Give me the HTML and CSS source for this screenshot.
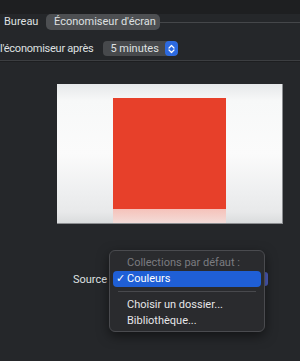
FILE: index.html
```html
<!DOCTYPE html>
<html lang="fr">
<head>
  <meta charset="UTF-8" />
  <title>Économiseur d'écran</title>
  <link rel="stylesheet" href="styles.css">
</head>
<body>

<!-- Barre du haut -->
<div class="topStrip"></div>

<!-- Onglets -->
<div class="tabs">
  <span class="tab">Bureau</span>
  <span class="tab active">Économiseur d'écran</span>
  <span class="tabLine"></span>
</div>

<!-- Délai -->
<div class="delayRow">
  <span class="label tight">l'économiseur après</span>
  <div class="popup">
    <span>5 minutes</span>
    <span class="stepper">
      <svg width="7" height="10" viewBox="0 0 7 10">
        <path d="M1 4 L3.5 1.5 L6 4 M1 6 L3.5 8.5 L6 6" fill="none" stroke="#fff" stroke-width="1.2" stroke-linecap="round" stroke-linejoin="round"/>
      </svg>
    </span>
  </div>
</div>
<div class="sep"></div>

<!-- Aperçu -->
<div class="previewWrap">
  <div class="preview">
    <div class="square">
      <div class="reflection"></div>
    </div>
  </div>
</div>

<!-- Source -->
<div class="sourceRow">
  <span class="label">Source</span>
  <div class="sourceBtn"></div>

  <div class="menu">
    <div class="menuHead">Collections par défaut :</div>
    <div class="menuItem selected"><span class="check">✓</span>Couleurs</div>
    <div class="menuSep"></div>
    <div class="menuItem">Choisir un dossier...</div>
    <div class="menuItem">Bibliothèque...</div>
  </div>
</div>

</body>
</html>
```

FILE: styles.css
```css
* { margin: 0; padding: 0; box-sizing: border-box; }
body {
  font-family: Roboto, "Liberation Sans", sans-serif;
  font-size: 11px;
  color: #dfe0e1;
  background: #25272a;
  width: 300px;
  height: 361px;
  overflow: hidden;
}

.topStrip {
  height: 14px;
  background: #1e1f21;
}

/* Onglets */
.tabs {
  display: flex;
  align-items: center;
  height: 16px;
}

.tab {
  padding: 0 6px 0 4px;
  line-height: 16px;
  white-space: nowrap;
}

.tabs .tab:first-child {
  width: 46px;
}

.tab.active {
  background: #4d4f52;
  border-radius: 5px;
  padding: 0 8px;
  width: 114px;
}

.tabLine {
  flex: 1;
  height: 1px;
  background: #45474a;
}

/* Délai */
.delayRow {
  display: flex;
  align-items: center;
  gap: 10px;
  margin-top: 11px;
  height: 15px;
}

.label.tight {
  letter-spacing: -0.25px;
}

.popup {
  display: flex;
  align-items: center;
  justify-content: space-between;
  width: 75px;
  height: 15px;
  background: #47494c;
  border-radius: 4px;
  padding-left: 7px;
  overflow: hidden;
}

.stepper {
  width: 13px;
  height: 15px;
  background: #2d6ae0;
  border-radius: 4px;
  display: flex;
  align-items: center;
  justify-content: center;
}

.sep {
  margin-top: 4px;
  height: 2px;
  border-top: 1px solid #3c3e41;
  border-bottom: 1px solid #1d1e20;
}

/* Aperçu */
.previewWrap {
  padding: 22px 17px 0 57px;
}

.preview {
  width: 226px;
  height: 140px;
  background: linear-gradient(#e6e8ea 0%, #f7f8f8 12%, #fbfbfb 50%, #eeeff0 78%, #e8e9ea 92%, #dadcdd 100%);
  border-right: 1px solid #8b8d90;
  border-bottom: 1px solid #8b8d90;
  display: flex;
  justify-content: center;
  padding-top: 14px;
}

.square {
  width: 113px;
  height: 111px;
  background: #e7402a;
  position: relative;
}

.reflection {
  position: absolute;
  top: 111px;
  left: 0;
  width: 113px;
  height: 14px;
  background: linear-gradient(#f5c2ba, #f3dcd8);
}

/* Source */
.sourceRow {
  position: relative;
  display: flex;
  align-items: center;
  margin-top: 47px;
  padding-left: 73px;
  height: 16px;
}

.sourceBtn {
  position: absolute;
  left: 255px;
  top: 1px;
  width: 13px;
  height: 14px;
  background: #4f5fbf;
  border-radius: 3px;
}

.menu {
  position: absolute;
  left: 109px;
  top: -21px;
  width: 156px;
  height: 82px;
  background: #2a2b2e;
  border: 1px solid #4a4b4f;
  border-radius: 6px;
  box-shadow: 0 4px 12px rgba(0,0,0,0.5);
  padding: 4px 3px;
  z-index: 5;
}

.menuHead {
  color: #7b7c80;
  padding-left: 14px;
  line-height: 16px;
}

.menuItem {
  position: relative;
  padding-left: 14px;
  line-height: 16px;
  color: #e6e6e8;
}

.menuItem.selected {
  background: #1f5fd6;
  border-radius: 4px;
  color: #fff;
}

.check {
  position: absolute;
  left: 3px;
}

.menuSep {
  height: 1px;
  background: #48494d;
  margin: 4px 5px 5px;
}
```
